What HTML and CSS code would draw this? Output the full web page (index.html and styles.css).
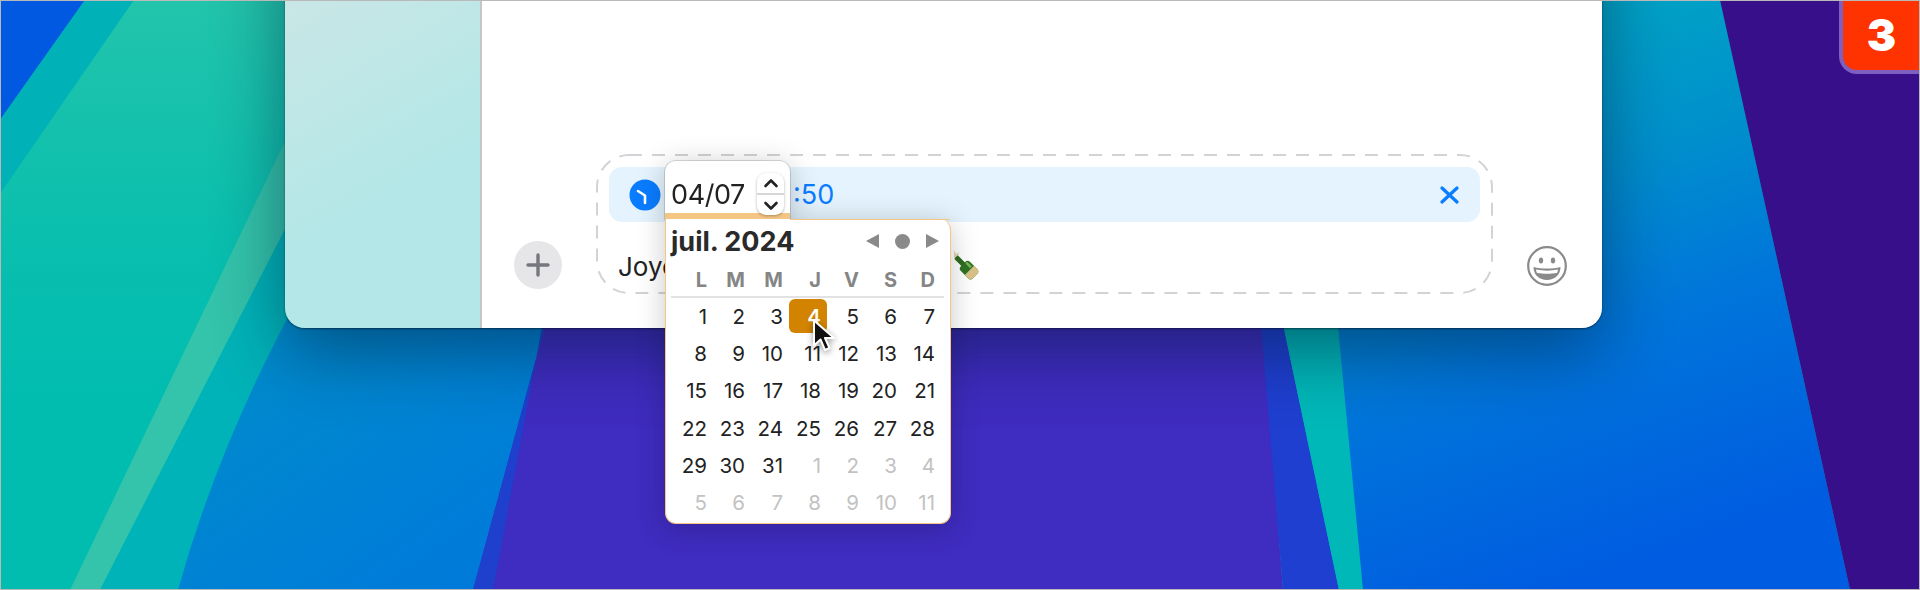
FILE: index.html
```html
<!DOCTYPE html>
<html lang="fr">
<head>
  <meta charset="UTF-8" />
  <meta name="viewport" content="width=device-width, initial-scale=1.0" />
  <title>Message programmé</title>
  <link rel="stylesheet" href="styles.css">
</head>
<body>
  <div class="desktop">
    <!-- wallpaper -->
    <svg class="wallpaper" viewBox="0 0 1920 590" preserveAspectRatio="none">
      <defs>
        <linearGradient id="gMint" x1="0" y1="0" x2="0" y2="1">
          <stop offset="0" stop-color="#22c4ab"/>
          <stop offset="0.55" stop-color="#0abfae"/>
          <stop offset="1" stop-color="#00bdb0"/>
        </linearGradient>
        <linearGradient id="gBlueLeft" x1="0" y1="0" x2="1" y2="1">
          <stop offset="0" stop-color="#0090c8"/>
          <stop offset="0.6" stop-color="#0080d6"/>
          <stop offset="1" stop-color="#0076dc"/>
        </linearGradient>
        <linearGradient id="gBlueRight" gradientUnits="userSpaceOnUse" x1="1500" y1="0" x2="1700" y2="590">
          <stop offset="0" stop-color="#00a8c4"/>
          <stop offset="0.3" stop-color="#0090cc"/>
          <stop offset="0.55" stop-color="#0076da"/>
          <stop offset="0.92" stop-color="#005ce0"/>
        </linearGradient>
      </defs>
      <rect width="1920" height="590" fill="#00bdb0"/>
      <polygon points="0,0 85,0 0,120" fill="#0059e0"/>
      <polygon points="85,0 134,0 0,194 0,120" fill="#00b2b8"/>
      <polygon points="134,0 300,0 300,300 130,400 0,420 0,194" fill="url(#gMint)"/>
      <polygon points="300,110 300,200 100,590 70,590" fill="#33c4ab"/>
      <polygon points="300,200 300,310 178,590 100,590" fill="#00b3b8"/>
      <path d="M300,295 L600,295 L473,590 L178,590 Q219,442 300,295 Z" fill="url(#gBlueLeft)"/>
      <polygon points="552,300 1261,300 1283,590 473,590" fill="#3f2cc0"/>
      <polygon points="552,300 547,300 493,590 473,590" fill="#1e40cc"/>
      <polygon points="1259,300 1278,300 1339,590 1283,590" fill="#1f3fd0"/>
      <polygon points="1278,300 1336,300 1363,590 1339,590" fill="#00b8b8"/>
      <polygon points="1307,0 1720,0 1850,590 1363,590" fill="url(#gBlueRight)"/>
      <polygon points="1720,0 1920,0 1920,590 1850,590" fill="#380f8a"/>
    </svg>

    <div class="window">
      <aside class="sidebar"></aside>
      <main class="conversation">
        <div class="composer">
          <button class="round-btn" aria-label="Ajouter">
            <svg viewBox="0 0 24 24" width="24" height="24"><path d="M12 2v20M2 12h20" stroke="#76767e" stroke-width="3.4" stroke-linecap="round" fill="none"/></svg>
          </button>
          <div class="field">
            <svg class="dashes" viewBox="0 0 897 140"><rect x="1" y="1" width="895" height="138" rx="32" fill="none" stroke="#d3d3d7" stroke-width="2" stroke-dasharray="13 10"/></svg>
            <div class="send-later">
              <svg class="clock" viewBox="0 0 32 32" width="32" height="32"><circle cx="16" cy="16" r="15.5" fill="#0a7cff"/><path d="M9 12l7 4.500V24" stroke="#fff" stroke-width="2.600" stroke-linecap="round" stroke-linejoin="round" fill="none"/></svg>
              <span class="send-time">:50</span>
              <svg class="close" viewBox="0 0 19 18" width="19" height="18"><path d="M2 2l15 14M17 2L2 16" stroke="#0a7cff" stroke-width="3.200" stroke-linecap="round" fill="none"/></svg>
            </div>
            <div class="message">
              <span class="message-text">Joye</span>
              <svg class="bottle" viewBox="0 0 32 32" width="32" height="32">
                <path d="M5 0l2 4 3-2-1 5 2 3-4 1-2-4z" fill="#d9c9a8" opacity="0.8"/>
                <g transform="translate(19 19) rotate(45)">
                  <rect x="-17" y="-2.500" width="13" height="5" rx="1" fill="#2f6b1f"/>
                  <rect x="-7" y="-6.500" width="17" height="13" rx="3.500" fill="#2f7322"/>
                  <rect x="-6" y="-4.500" width="7" height="2.500" rx="1" fill="#7fb45a"/>
                  <path d="M2-6.500h4.500c2 0 3.500 1.500 3.500 3.500v6c0 2-1.500 3.500-3.500 3.500H2z" fill="#d9c189"/>
                </g>
              </svg>
            </div>
          </div>
          <svg class="smiley" viewBox="0 0 40 40" width="40" height="40">
            <circle cx="20" cy="20" r="18.800" fill="#fff" stroke="#8a8a8a" stroke-width="2.200"/>
            <ellipse cx="14" cy="14.500" rx="2.200" ry="3" fill="#8a8a8a"/>
            <ellipse cx="26" cy="14.500" rx="2.200" ry="3" fill="#8a8a8a"/>
            <path d="M6.500 21c8 2 19 2 27 0 0 8-6 13-13.500 13S6.500 29 6.500 21z" fill="#8a8a8a"/>
            <path d="M9 23.500c7 1.500 15 1.500 22 0-.2 1.500-.5 2.500-1 3.500-6 1-14 1-20 0-.5-1-.8-2-1-3.500z" fill="#fff"/>
          </svg>
        </div>
      </main>
    </div>

    <!-- date picker popover -->
    <div class="picker">
      <div class="date-input">
        <span class="date-value">04/07</span>
        <div class="stepper">
          <svg viewBox="0 0 16 10" width="16" height="10"><path d="M2.500 8L8 2.500 13.500 8" stroke="#222" stroke-width="2.600" stroke-linecap="round" stroke-linejoin="round" fill="none"/></svg>
          <svg viewBox="0 0 16 10" width="16" height="10"><path d="M2.500 2L8 7.500 13.500 2" stroke="#222" stroke-width="2.600" stroke-linecap="round" stroke-linejoin="round" fill="none"/></svg>
        </div>
      </div>
      <div class="calendar">
        <div class="cal-head">
          <span class="cal-title">juil. 2024</span>
          <div class="cal-nav">
            <i class="tri tri-left"></i>
            <i class="dot"></i>
            <i class="tri tri-right"></i>
          </div>
        </div>
        <div class="cal-days">
          <span>L</span><span>M</span><span>M</span><span>J</span><span>V</span><span>S</span><span>D</span>
        </div>
        <div class="cal-grid">
          <span>1</span><span>2</span><span>3</span><span class="today">4</span><span>5</span><span>6</span><span>7</span>
          <span>8</span><span>9</span><span>10</span><span>11</span><span>12</span><span>13</span><span>14</span>
          <span>15</span><span>16</span><span>17</span><span>18</span><span>19</span><span>20</span><span>21</span>
          <span>22</span><span>23</span><span>24</span><span>25</span><span>26</span><span>27</span><span>28</span>
          <span>29</span><span>30</span><span>31</span><span class="off">1</span><span class="off">2</span><span class="off">3</span><span class="off">4</span>
          <span class="off">5</span><span class="off">6</span><span class="off">7</span><span class="off">8</span><span class="off">9</span><span class="off">10</span><span class="off">11</span>
        </div>
      </div>
    </div>

    <svg class="cursor" viewBox="0 0 26 36" width="26" height="36">
      <path d="M2 1.500v25l6.500-6 4.500 10.500 4.500-2-4.500-10h9z" fill="#111" stroke="#fff" stroke-width="2" stroke-linejoin="round"/>
    </svg>

    <div class="badge">3</div>
    <div class="frame"></div>
  </div>
</body>
</html>
```

FILE: styles.css
```css
html, body {
  margin: 0;
  padding: 0;
}
body {
  font-family: "Inter", "Liberation Sans", sans-serif;
  color: #222;
  overflow: hidden;
}
.desktop {
  position: relative;
  width: 1920px;
  height: 590px;
  overflow: hidden;
}
.wallpaper {
  position: absolute;
  inset: 0;
  width: 100%;
  height: 100%;
}
.frame {
  position: absolute;
  inset: 0;
  box-shadow: inset 0 0 0 1px #b9b9b9;
  pointer-events: none;
}

/* the app window, cropped by the top of the picture */
.window {
  position: absolute;
  left: 285px;
  top: -100px;
  width: 1317px;
  height: 428px;
  display: flex;
  border-radius: 0 0 20px 20px;
  overflow: hidden;
  box-shadow: 0 24px 70px rgba(0, 20, 50, 0.48), 0 1px 2px rgba(0, 0, 0, 0.5);
}
.sidebar {
  width: 195px;
  background: linear-gradient(150deg, #d2e6e6 0%, #b4e7e7 65%);
  border-right: 2px solid #c6c6c6;
}
.conversation {
  flex: 1;
  background: #fff;
  display: flex;
  align-items: flex-end;
}
.composer {
  flex: 1;
  display: flex;
  align-items: flex-end;
  padding: 0 0 34px 32px;
}
.round-btn {
  width: 48px;
  height: 48px;
  border: 0;
  border-radius: 50%;
  background: #e6e6e9;
  display: flex;
  align-items: center;
  justify-content: center;
  padding: 0;
  margin: 0 34px 5px 0;
}
.field {
  position: relative;
  width: 897px;
  height: 140px;
  box-sizing: border-box;
  padding: 13px 13px 0 13px;
}
.dashes {
  position: absolute;
  inset: 0;
  width: 100%;
  height: 100%;
}
.send-later {
  position: relative;
  display: flex;
  align-items: center;
  height: 55px;
  box-sizing: border-box;
  padding: 0 21px 0 20px;
  background: #e4f3fd;
  border-radius: 13px;
  color: #0a7cff;
  font-size: 27px;
}
.clock {
  margin-right: 132px;
}
.send-time {
  flex: 1;
}
.message {
  position: relative;
  display: flex;
  align-items: center;
  height: 72px;
  box-sizing: border-box;
  padding: 16px 0 0 9px;
  font-size: 26px;
  color: #222;
}
.message-text {
  width: 331px;
}
.smiley {
  margin: 0 0 8px 34px;
}

/* date picker */
.picker {
  position: absolute;
  left: 665px;
  top: 161px;
  width: 286px;
  filter: drop-shadow(0 4px 14px rgba(0, 0, 0, 0.22));
}
.date-input {
  position: relative;
  width: 125px;
  height: 52px;
  background: #fff;
  border-radius: 11px 11px 0 0;
  border-bottom: 6px solid #f4c583;
  box-shadow: 0 0 0 1px rgba(0, 0, 0, 0.14);
  display: flex;
  align-items: flex-end;
}
.date-value {
  font-size: 27px;
  line-height: 36px;
  margin-left: 6px;
  letter-spacing: -0.4px;
}
.stepper {
  position: absolute;
  left: 92px;
  top: 12px;
  width: 27px;
  height: 42px;
  box-sizing: border-box;
  background: #fff;
  border-radius: 9px;
  box-shadow: 0 1px 3px rgba(0, 0, 0, 0.3);
  display: flex;
  flex-direction: column;
  justify-content: space-between;
  align-items: center;
  padding: 5px 0 4px;
  background-image: linear-gradient(#d6d6d6, #d6d6d6);
  background-size: 100% 2px;
  background-position: 0 20px;
  background-repeat: no-repeat;
}
.calendar {
  position: relative;
  width: 286px;
  height: 305px;
  box-sizing: border-box;
  background: #fff;
  border: 1px solid #f4c583;
  border-top: 0;
  border-radius: 0 11px 11px 11px;
  padding-right: 15px;
}
/* orange edge along the part of the top not under the date field */
.calendar::before {
  content: "";
  position: absolute;
  left: 124px;
  right: 0;
  top: 0;
  height: 1px;
  background: #f4c583;
  border-top-right-radius: 11px;
}
.cal-head {
  display: flex;
  align-items: center;
  justify-content: space-between;
  height: 44px;
  padding-left: 5px;
}
.cal-title {
  font-size: 27px;
  font-weight: 700;
  color: #2a2a2a;
}
.cal-nav {
  display: flex;
  align-items: center;
  gap: 16px;
  margin-right: -4px;
}
.tri {
  display: block;
  width: 0;
  height: 0;
  border-top: 7px solid transparent;
  border-bottom: 7px solid transparent;
}
.tri-left {
  border-right: 13px solid #8a8a8a;
}
.tri-right {
  border-left: 13px solid #8a8a8a;
}
.dot {
  display: block;
  width: 15px;
  height: 15px;
  border-radius: 50%;
  background: #8a8a8a;
}
.cal-days,
.cal-grid {
  display: grid;
  grid-template-columns: repeat(7, 38px);
  justify-items: end;
  padding-left: 3px;
}
.cal-days {
  height: 33px;
  align-items: center;
  margin: 0 -9px 0 5px;
  padding-left: 0;
  padding-right: 9px;
  justify-content: end;
  border-bottom: 2px solid #e2e2e2;
  font-size: 20px;
  font-weight: 700;
  color: #858585;
}
.cal-grid {
  grid-auto-rows: 37.2px;
  align-items: center;
  font-size: 20.5px;
}
.cal-grid span {
  position: relative;
}
.cal-grid .off {
  color: #c2c2c2;
}
.cal-grid .today {
  color: #fff;
  font-weight: 600;
  z-index: 0;
}
.cal-grid .today::before {
  content: "";
  position: absolute;
  z-index: -1;
  right: -6px;
  top: -5px;
  width: 38px;
  height: 34px;
  background: #d28300;
  border-radius: 6px;
}

.cursor {
  position: absolute;
  left: 812px;
  top: 319px;
  filter: drop-shadow(0 2px 3px rgba(0, 0, 0, 0.4));
}

/* step number in the corner */
.badge {
  position: absolute;
  right: 0;
  top: 0;
  width: 77px;
  height: 70px;
  background: #ff3300;
  border-left: 4px solid #7d5fc0;
  border-bottom: 4px solid #7d5fc0;
  border-bottom-left-radius: 18px;
  color: #fff;
  font-size: 44px;
  font-weight: 900;
  display: flex;
  align-items: center;
  justify-content: center;
}
```
